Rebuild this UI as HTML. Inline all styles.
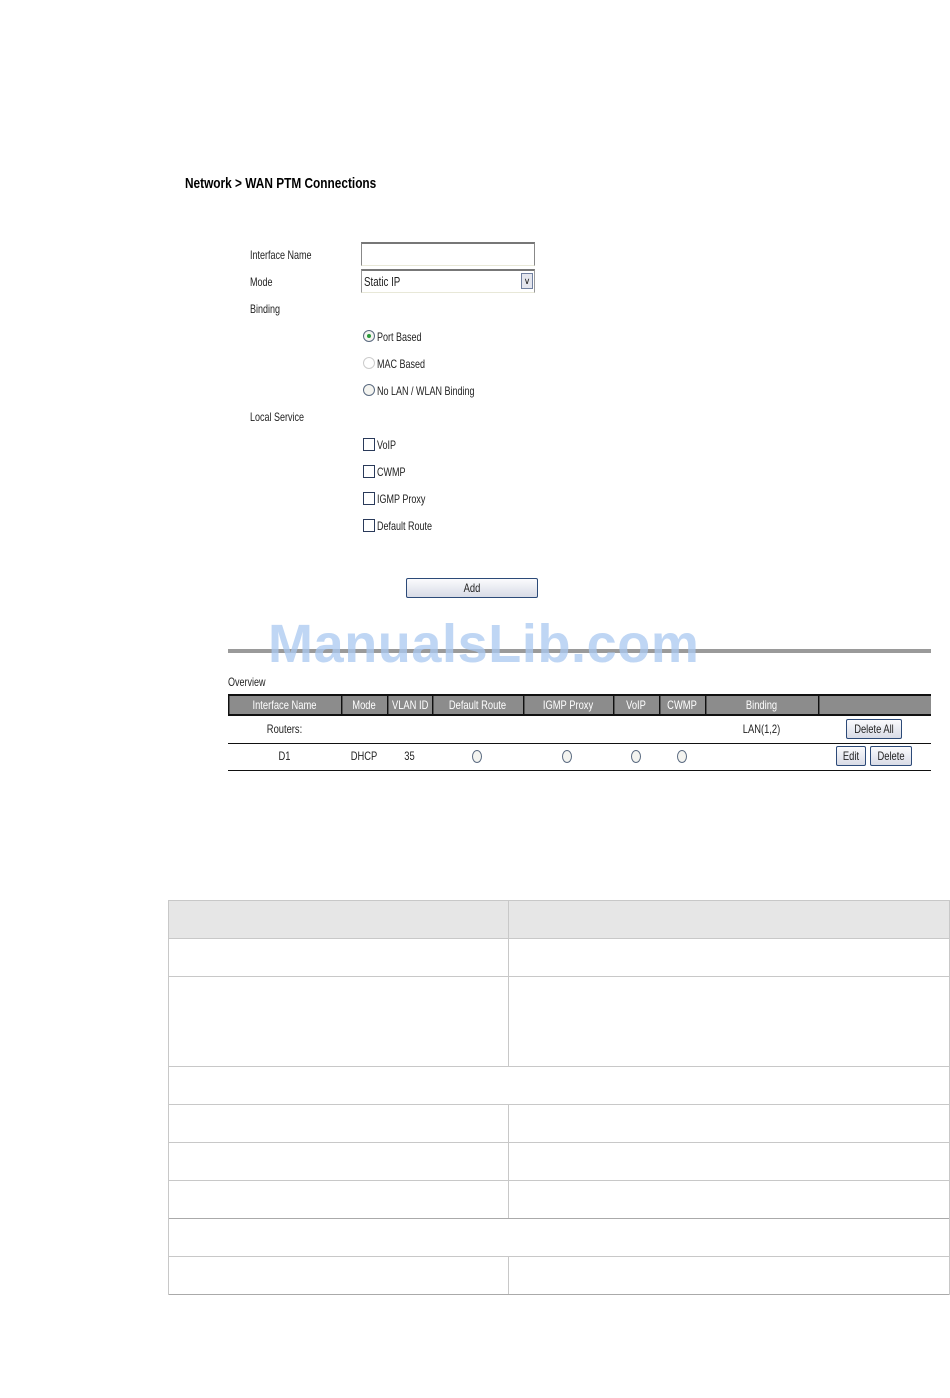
<!DOCTYPE html>
<html><head><meta charset="utf-8"><style>
body{margin:0;width:950px;height:1398px;background:#fff;position:relative;overflow:hidden;font-family:"Liberation Sans",Arial,sans-serif;color:#222}
.a{position:absolute}
.t{position:absolute;white-space:nowrap;transform-origin:0 0;transform:scaleX(.75);font-size:12px;line-height:14px}
.c{position:absolute;white-space:nowrap;font-size:12px;line-height:14px;text-align:center;transform:scaleX(.78)}
.rad{position:absolute;width:10px;height:10px;border:1px solid #5a6a80;border-radius:50%;background:#f4f4f0}
.chk{position:absolute;width:10px;height:11px;border:1px solid #2a3a5a;background:#fff}
.btn{position:absolute;border:1px solid #2c4a78;border-radius:2px;background:linear-gradient(#fbfbfd,#d8dbe6);box-sizing:border-box}
.hc{position:absolute;top:696px;height:18px;background:#8c8c8c;color:#fff;border-left:1px solid #555}
.g{position:absolute;background:#c8c8c8}
</style></head><body>
<div class="t" style="left:185px;top:175px;font-size:15px;font-weight:bold;line-height:17px;transform:scaleX(.79);color:#000">Network &gt; WAN PTM Connections</div>

<div class="t" style="left:250px;top:248px">Interface Name</div>
<div class="t" style="left:250px;top:275px">Mode</div>
<div class="t" style="left:250px;top:302px">Binding</div>
<div class="t" style="left:250px;top:410px">Local Service</div>

<div class="a" style="left:361px;top:242px;width:172px;height:21px;border:1px solid #888;border-top:2px solid #777;background:#fff;border-bottom-color:#e8e8d8"></div>
<div class="a" style="left:361px;top:269px;width:172px;height:21px;border:1px solid #999;border-top:2px solid #777;background:#fff;border-bottom-color:#e8e8d8"></div>
<div class="t" style="left:364px;top:275px;font-size:13px">Static IP</div>
<div class="a" style="left:521px;top:273px;width:10px;height:14px;border:1px solid #7080a0;background:#e4e6ee;font-size:9px;line-height:14px;text-align:center">&#x2228;</div>

<div class="rad" style="left:363px;top:330px"></div><div class="a" style="left:367px;top:334px;width:4px;height:4px;border-radius:50%;background:#2a9a3a"></div>
<div class="t" style="left:377px;top:330px">Port Based</div>
<div class="rad" style="left:363px;top:357px;border-color:#ccc;background:#fff"></div>
<div class="t" style="left:377px;top:357px">MAC Based</div>
<div class="rad" style="left:363px;top:384px"></div>
<div class="t" style="left:377px;top:384px">No LAN / WLAN Binding</div>

<div class="chk" style="left:363px;top:438px"></div><div class="t" style="left:377px;top:438px">VoIP</div>
<div class="chk" style="left:363px;top:465px"></div><div class="t" style="left:377px;top:465px">CWMP</div>
<div class="chk" style="left:363px;top:492px"></div><div class="t" style="left:377px;top:492px">IGMP Proxy</div>
<div class="chk" style="left:363px;top:519px"></div><div class="t" style="left:377px;top:519px">Default Route</div>

<div class="btn" style="left:406px;top:578px;width:132px;height:20px"></div>
<div class="c" style="left:406px;top:581px;width:132px">Add</div>

<div class="a" style="left:228px;top:649px;width:703px;height:4px;background:#9a9a9a"></div>
<div class="a" style="left:268px;top:612px;font-size:54px;font-weight:bold;color:rgba(170,200,240,.75);line-height:64px;white-space:nowrap;letter-spacing:0.6px">ManualsLib.com</div>

<div class="t" style="left:228px;top:675px">Overview</div>
<div class="a" style="left:228px;top:694px;width:703px;height:22px;background:#111"></div>
<div class="hc" style="left:229px;width:111px"></div>
<div class="hc" style="left:342px;width:44px"></div>
<div class="hc" style="left:388px;width:43px"></div>
<div class="hc" style="left:433px;width:89px"></div>
<div class="hc" style="left:524px;width:88px"></div>
<div class="hc" style="left:614px;width:44px"></div>
<div class="hc" style="left:660px;width:44px"></div>
<div class="hc" style="left:706px;width:111px"></div>
<div class="hc" style="left:819px;width:111px"></div>
<div class="c" style="left:228px;top:698px;width:113px;color:#fff">Interface Name</div>
<div class="c" style="left:341px;top:698px;width:46px;color:#fff">Mode</div>
<div class="c" style="left:387px;top:698px;width:45px;color:#fff">VLAN ID</div>
<div class="c" style="left:432px;top:698px;width:91px;color:#fff">Default Route</div>
<div class="c" style="left:523px;top:698px;width:90px;color:#fff">IGMP Proxy</div>
<div class="c" style="left:613px;top:698px;width:46px;color:#fff">VoIP</div>
<div class="c" style="left:659px;top:698px;width:46px;color:#fff">CWMP</div>
<div class="c" style="left:705px;top:698px;width:113px;color:#fff">Binding</div>

<div class="c" style="left:228px;top:722px;width:113px">Routers:</div>
<div class="c" style="left:705px;top:722px;width:113px">LAN(1,2)</div>
<div class="btn" style="left:846px;top:719px;width:56px;height:20px"></div>
<div class="c" style="left:846px;top:722px;width:56px">Delete All</div>
<div class="a" style="left:228px;top:743px;width:703px;height:1px;background:#111"></div>

<div class="c" style="left:228px;top:749px;width:113px">D1</div>
<div class="c" style="left:341px;top:749px;width:46px">DHCP</div>
<div class="c" style="left:387px;top:749px;width:45px">35</div>
<div class="rad" style="left:472px;top:750px;height:11px;width:8px;border-radius:50%"></div>
<div class="rad" style="left:562px;top:750px;height:11px;width:8px"></div>
<div class="rad" style="left:631px;top:750px;height:11px;width:8px"></div>
<div class="rad" style="left:677px;top:750px;height:11px;width:8px"></div>
<div class="btn" style="left:836px;top:746px;width:30px;height:20px"></div>
<div class="c" style="left:836px;top:749px;width:30px">Edit</div>
<div class="btn" style="left:870px;top:746px;width:42px;height:20px"></div>
<div class="c" style="left:870px;top:749px;width:42px">Delete</div>
<div class="a" style="left:228px;top:770px;width:703px;height:1px;background:#111"></div>

<div class="a" style="left:168px;top:900px;width:782px;height:38px;background:#e6e6e6"></div>
<div class="g" style="left:168px;top:900px;width:782px;height:1px"></div>
<div class="g" style="left:168px;top:938px;width:782px;height:1px"></div>
<div class="g" style="left:168px;top:976px;width:782px;height:1px"></div>
<div class="g" style="left:168px;top:1066px;width:782px;height:1px"></div>
<div class="g" style="left:168px;top:1104px;width:782px;height:1px"></div>
<div class="g" style="left:168px;top:1142px;width:782px;height:1px"></div>
<div class="g" style="left:168px;top:1180px;width:782px;height:1px"></div>
<div class="g" style="left:168px;top:1218px;width:782px;height:1px;background:#aaa"></div>
<div class="g" style="left:168px;top:1256px;width:782px;height:1px"></div>
<div class="g" style="left:168px;top:1294px;width:782px;height:1px;background:#aaa"></div>
<div class="g" style="left:168px;top:900px;width:1px;height:395px"></div>
<div class="g" style="left:949px;top:900px;width:1px;height:395px"></div>
<div class="g" style="left:508px;top:900px;width:1px;height:166px"></div>
<div class="g" style="left:508px;top:1104px;width:1px;height:114px"></div>
<div class="g" style="left:508px;top:1256px;width:1px;height:38px"></div>
</body></html>
